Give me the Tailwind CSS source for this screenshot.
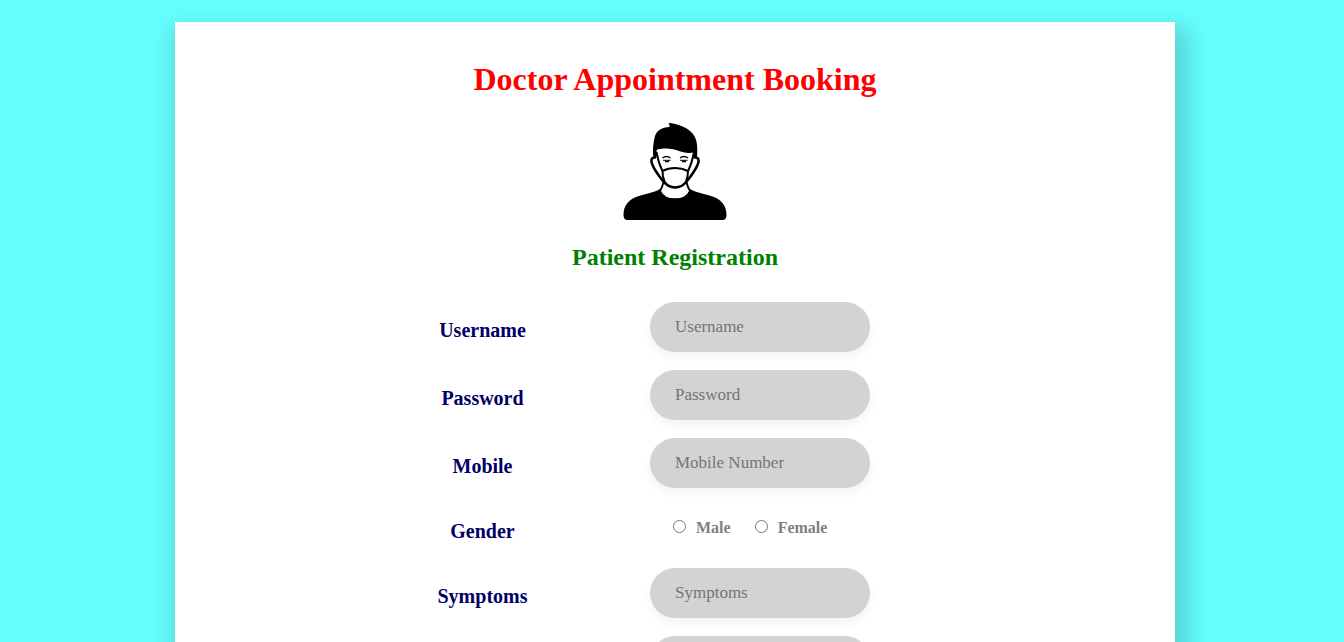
<!DOCTYPE html>
<html lang="en">
<head>
<meta charset="utf-8">
<meta name="viewport" content="width=device-width, initial-scale=1">
<title>Doctor Appointment Booking</title>
<script src="https://cdn.jsdelivr.net/npm/@tailwindcss/browser@4"></script>
</head>
<body class="h-screen overflow-y-hidden bg-[#66ffff] pt-[22px] pl-1.5 font-['Liberation_Serif','Times_New_Roman',serif]">
<main class="mx-auto max-w-[1000px] bg-white px-5 pt-10 pb-10 shadow-[6px_14px_20px_10px_rgba(0,0,0,0.15)]">
  <h1 class="text-center text-[32px] leading-[34px] font-bold text-[#ff0000]">Doctor Appointment Booking</h1>
  <svg class="mx-auto mt-[26px] h-[100px] w-[104px]" viewBox="0 0 104 100" role="img" aria-label="Patient wearing a face mask">
    <path d="M0.500 93C0.500 83 6 77 16 74C25 71 31 70.500 37 67C41 80 63 80 67 67C73 70.500 79 71 88 74C98 77 103.500 83 103.500 93Q103.500 98 99.500 98H4.500Q0.500 98 0.500 93Z" fill="#000"/>
    <path d="M40.500 60Q39.500 65 37 69C42 80 62 80 67 69Q64.500 65 63.500 60" fill="#fff" stroke="#000" stroke-width="1.800"/>
    <path d="M32 24V35.500C28 35.500 27.500 39 29.500 43C32 49 36 54 40 59C44 64 48 65.500 52 65.500C56 65.500 60 64 64 59C68 54 72 49 74.500 43C76.500 39 76 35.500 72 35.500V24Z" fill="#fff" stroke="#000" stroke-width="2.600" stroke-linejoin="round"/>
    <path d="M30.500 36C29.500 29 30 21 32 14C34 8 39 5.500 46.500 5Q47 3 45.500 1C54 1.500 65 5.500 70 12C75 18 74.500 28 74 36H71.500L71 30.500C64 32 58 29.500 53 28C46 26 38 26 33.500 28L33 36Z" fill="#000"/>
    <path d="M33.500 30Q35.500 41 39.500 49M71 30Q69 41 65 49" fill="none" stroke="#000" stroke-width="2"/>
    <path d="M39.500 36Q43.500 33 47.500 36M57 36Q61 33 65 36" fill="none" stroke="#000" stroke-width="1.400"/>
    <path d="M40 38.300H47.500M57 38.300H64.500" fill="none" stroke="#000" stroke-width="1"/>
    <path d="M42 39.500H46M59 39.500H63" fill="none" stroke="#000" stroke-width="1.300"/>
    <path d="M39.500 49Q45 46 52 46Q59 46 65 49Q65 55 63 59.500C58 67 46 67 41.500 59.500Q39.500 55 39.500 49Z" fill="#fff" stroke="#000" stroke-width="2"/>
  </svg>
  <h2 class="mt-5 text-center text-2xl leading-[30px] font-bold text-[#008000]">Patient Registration</h2>

  <form class="mx-auto mt-[30px] grid max-w-[600px] grid-cols-[215px_220px] items-center gap-x-15 gap-y-[18px]">
    <label for="username" class="pt-1.5 text-center text-xl font-bold text-[#000066]">Username</label>
    <input id="username" type="text" placeholder="Username" class="h-[50px] w-full rounded-full bg-[#d3d3d3] px-[25px] text-[17px] shadow-[0_5px_10px_rgba(0,0,0,0.05)] placeholder:text-[#757575]">

    <label for="password" class="pt-1.5 text-center text-xl font-bold text-[#000066]">Password</label>
    <input id="password" type="password" placeholder="Password" class="h-[50px] w-full rounded-full bg-[#d3d3d3] px-[25px] text-[17px] shadow-[0_5px_10px_rgba(0,0,0,0.05)] placeholder:text-[#757575]">

    <label for="mobile" class="pt-1.5 text-center text-xl font-bold text-[#000066]">Mobile</label>
    <input id="mobile" type="tel" placeholder="Mobile Number" class="h-[50px] w-full rounded-full bg-[#d3d3d3] px-[25px] text-[17px] shadow-[0_5px_10px_rgba(0,0,0,0.05)] placeholder:text-[#757575]">

    <span id="gender" class="pt-1.5 text-center text-xl font-bold text-[#000066]">Gender</span>
    <div role="radiogroup" aria-labelledby="gender" class="flex h-11 items-center gap-6 pl-[23px] text-base font-bold text-[#808080]">
      <label class="flex items-center gap-2.5"><input type="radio" name="gender" value="male" class="mb-1 size-[13px]">Male</label>
      <label class="flex items-center gap-2.5"><input type="radio" name="gender" value="female" class="mb-1 size-[13px]">Female</label>
    </div>

    <label for="symptoms" class="pt-1.5 text-center text-xl font-bold text-[#000066]">Symptoms</label>
    <input id="symptoms" type="text" placeholder="Symptoms" class="h-[50px] w-full rounded-full bg-[#d3d3d3] px-[25px] text-[17px] shadow-[0_5px_10px_rgba(0,0,0,0.05)] placeholder:text-[#757575]">

    <input type="text" aria-label="Additional details" class="col-start-2 h-[50px] w-full rounded-full bg-[#d3d3d3] px-[25px] text-[17px] shadow-[0_5px_10px_rgba(0,0,0,0.05)]">
  </form>
</main>
</body>
</html>
